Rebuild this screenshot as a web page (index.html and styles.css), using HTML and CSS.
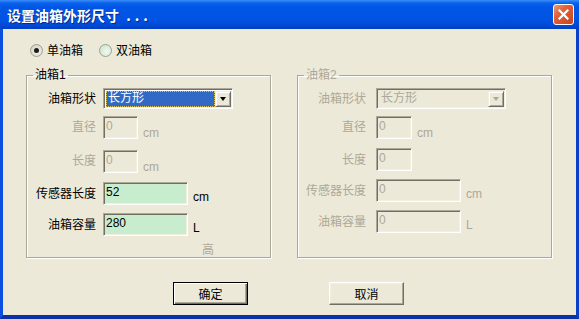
FILE: index.html
```html
<!DOCTYPE html>
<html>
<head>
    <meta charset="utf-8">
    <title>设置油箱外形尺寸</title>
    <link rel="stylesheet" href="styles.css">
</head>
<body>
<div class="window">
    <div class="titlebar">
        <span class="title">设置油箱外形尺寸 <span class="dots">...</span></span>
        <span class="close-btn">
            <svg width="11" height="11" viewBox="0 0 11 11"><path d="M1.5 1.5L9.5 9.5M9.5 1.5L1.5 9.5" stroke="#fff" stroke-width="2.2" stroke-linecap="square"/></svg>
        </span>
    </div>
    <div class="client">
        <div class="radio-row">
            <label class="radio"><span class="radio-dot checked"></span>单油箱</label>
            <label class="radio"><span class="radio-dot"></span>双油箱</label>
        </div>
        <div class="groups">
            <fieldset class="group group-1">
                <legend>油箱1</legend>
                <div class="rows">
                    <div class="row row-combo">
                        <span class="lbl">油箱形状</span>
                        <div class="combo">
                            <span class="combo-text selected">长方形</span>
                            <span class="combo-btn"></span>
                        </div>
                    </div>
                    <div class="row">
                        <span class="lbl disabled">直径</span>
                        <div class="field short off">0</div>
                        <span class="unit unit-low disabled">cm</span>
                    </div>
                    <div class="row">
                        <span class="lbl disabled">长度</span>
                        <div class="field short off">0</div>
                        <span class="unit unit-low disabled">cm</span>
                    </div>
                    <div class="row">
                        <span class="lbl">传感器长度</span>
                        <div class="field long">52</div>
                        <span class="unit">cm</span>
                    </div>
                    <div class="row">
                        <span class="lbl">油箱容量</span>
                        <div class="field long">280</div>
                        <span class="unit">L</span>
                    </div>
                </div>
                <div class="group-note">高</div>
            </fieldset>
            <fieldset class="group group-2">
                <legend>油箱2</legend>
                <div class="rows">
                    <div class="row row-combo">
                        <span class="lbl disabled">油箱形状</span>
                        <div class="combo off">
                            <span class="combo-text">长方形</span>
                            <span class="combo-btn"></span>
                        </div>
                    </div>
                    <div class="row">
                        <span class="lbl disabled">直径</span>
                        <div class="field short off">0</div>
                        <span class="unit unit-low disabled">cm</span>
                    </div>
                    <div class="row">
                        <span class="lbl disabled">长度</span>
                        <div class="field short off">0</div>
                    </div>
                    <div class="row">
                        <span class="lbl disabled">传感器长度</span>
                        <div class="field long off">0</div>
                        <span class="unit disabled">cm</span>
                    </div>
                    <div class="row">
                        <span class="lbl disabled">油箱容量</span>
                        <div class="field long off">0</div>
                        <span class="unit disabled">L</span>
                    </div>
                </div>
            </fieldset>
        </div>
        <div class="buttons">
            <button class="btn btn-default">确定</button>
            <button class="btn">取消</button>
        </div>
    </div>
</div>
</body>
</html>
```

FILE: styles.css
```css
body {
    margin: 0;
    font-family: "Liberation Sans", "Noto Sans CJK SC", sans-serif;
    font-size: 12px;
    color: #000;
}
.window {
    width: 579px;
    height: 319px;
    display: flex;
    flex-direction: column;
    background: #ece9d8;
}
.titlebar {
    height: 29px;
    flex-shrink: 0;
    display: flex;
    align-items: center;
    justify-content: space-between;
    padding: 0 5px 0 7px;
    box-sizing: border-box;
    background: linear-gradient(#3b8ff8 0, #0a62ec 3px, #0056e6 7px, #0054e3 18px, #004ad8 25px, #003fc0 29px);
}
.title {
    color: #fff;
    font-family: "Noto Sans CJK SC", sans-serif;
    font-weight: bold;
    font-size: 14px;
    line-height: 16px;
    text-shadow: 1px 1px #0b2a8a;
}
.dots {
    margin-left: 4px;
    letter-spacing: 4px;
}
.close-btn {
    width: 21px;
    height: 21px;
    box-sizing: border-box;
    border: 1px solid #fff;
    border-radius: 3px;
    background: linear-gradient(135deg, #f09a78 0, #e2623a 35%, #c9431a 100%);
    display: flex;
    align-items: center;
    justify-content: center;
}
.client {
    flex: 1;
    border-left: 3px solid #0a4fe2;
    border-right: 3px solid #0a40c8;
    border-bottom: 4px solid #0a31a8;
}
.radio-row {
    display: flex;
    padding: 15px 0 0 27px;
    height: 13px;
}
.radio {
    display: flex;
    align-items: center;
    gap: 4px;
    margin-right: 16px;
    line-height: 14px;
}
.radio-dot {
    width: 13px;
    height: 13px;
    box-sizing: border-box;
    border-radius: 50%;
    border: 1px solid #a09f94;
    background: radial-gradient(circle at 60% 60%, #f4f8ee 0, #cfe9d3 70%);
    display: flex;
    align-items: center;
    justify-content: center;
}
.radio-dot.checked {
    background: radial-gradient(circle at 60% 60%, #f4f4ee 0, #d6d4c8 75%);
}
.radio-dot.checked::after {
    content: "";
    width: 5px;
    height: 5px;
    border-radius: 50%;
    background: #1b1b1b;
}
.groups {
    display: flex;
    gap: 26px;
    margin: 11px 0 0 23px;
}
.group {
    margin: 0;
    padding: 6px 0 0 0;
    height: 190px;
    box-sizing: border-box;
    border: 1px solid #aca899;
    box-shadow: inset 1px 1px #fff, 1px 1px #fff;
    min-width: 0;
}
.group-1 {
    width: 245px;
}
.group-2 {
    width: 255px;
}
.group legend {
    margin-left: 6px;
    padding: 0 2px;
    line-height: 14px;
}
.group-2 legend {
    color: #aca899;
}
.rows {
    display: flex;
    flex-direction: column;
    gap: 8px;
}
.row {
    display: flex;
    align-items: center;
}
.row-combo {
    margin-bottom: -3px;
}
.lbl {
    width: 69px;
    margin-right: 7px;
    text-align: right;
    line-height: 14px;
    flex-shrink: 0;
}
.group-2 .lbl {
    width: 68px;
    margin-right: 10px;
}
.disabled {
    color: #aca899;
}
.combo {
    width: 130px;
    height: 21px;
    box-sizing: border-box;
    display: flex;
    padding: 1px;
    border-top: 1px solid #aca899;
    border-left: 1px solid #aca899;
    border-right: 1px solid #fff;
    border-bottom: 1px solid #fff;
    box-shadow: inset 1px 1px #716f64, inset -1px -1px #f1efe2;
    background: #fff;
}
.combo.off {
    background: #ece9d8;
}
.combo-text {
    flex: 1;
    margin: 1px 0 0 1px;
    padding-left: 2px;
    line-height: 15px;
}
.combo.off .combo-text {
    color: #aca899;
}
.combo-text.selected {
    background: #316ac5;
    color: #fff;
    outline: 1px dotted #d8c060;
    outline-offset: -1px;
}
.combo-btn {
    width: 16px;
    margin-top: 1px;
    box-sizing: border-box;
    background: #ece9d8;
    border-top: 1px solid #f1efe2;
    border-left: 1px solid #f1efe2;
    border-right: 1px solid #716f64;
    border-bottom: 1px solid #716f64;
    box-shadow: inset 1px 1px #fff, inset -1px -1px #aca899;
    display: flex;
    align-items: center;
    justify-content: center;
}
.combo-btn::after {
    content: "";
    border-left: 3.5px solid transparent;
    border-right: 3.5px solid transparent;
    border-top: 4px solid #000;
}
.combo.off .combo-btn::after {
    border-top-color: #aca899;
}
.field {
    height: 23px;
    box-sizing: border-box;
    padding: 2px 2px 0 2px;
    line-height: 14px;
    background: #c8ecce;
    border-top: 1px solid #aca899;
    border-left: 1px solid #aca899;
    border-right: 1px solid #fff;
    border-bottom: 1px solid #fff;
    box-shadow: inset 1px 1px #716f64, inset -1px -1px #f1efe2;
}
.field.off {
    background: #ece9d8;
    color: #aca899;
}
.field.short {
    width: 35px;
}
.group-2 .field.short {
    width: 36px;
}
.field.long {
    width: 85px;
}
.unit {
    align-self: flex-start;
    margin: 8px 0 0 5px;
    line-height: 14px;
}
.unit-low {
    margin-top: 12px;
}
.group-note {
    margin: 7px 0 0 175px;
    line-height: 14px;
    color: #aca899;
}
.buttons {
    display: flex;
    gap: 81px;
    margin: 24px 0 0 170px;
}
.btn {
    width: 75px;
    height: 23px;
    padding: 0;
    font-family: "Liberation Sans", "Noto Sans CJK SC", sans-serif;
    font-size: 12px;
    color: #000;
    background: #ece9d8;
    border-top: 1px solid #fff;
    border-left: 1px solid #fff;
    border-right: 1px solid #716f64;
    border-bottom: 1px solid #716f64;
    box-shadow: inset -1px -1px #aca899, inset 1px 1px #f1efe2;
}
.btn-default {
    border: 1px solid #000;
    box-shadow: inset 1px 1px #fff, inset -1px -1px #716f64, inset -2px -2px #aca899;
}
```
